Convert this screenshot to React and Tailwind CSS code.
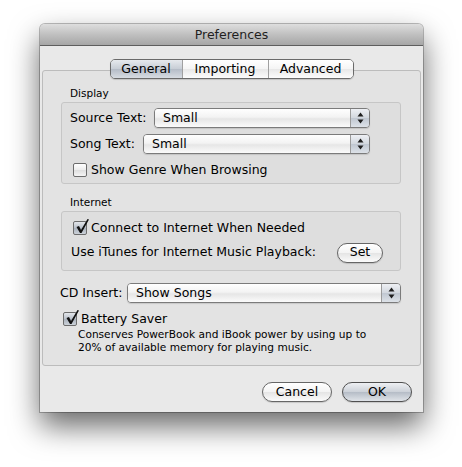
import React from 'react';

const font = "font-['DejaVu_Sans',sans-serif]";

const Arrows = () => (
  <svg width="7" height="12" viewBox="0 0 7 12" aria-hidden="true">
    <path d="M3.5 0.5 L6.5 4.5 L0.5 4.5 Z" fill="#1e1e1e" />
    <path d="M0.5 7.5 L6.5 7.5 L3.5 11.5 Z" fill="#1e1e1e" />
  </svg>
);

const Popup = ({ value, width }) => (
  <div className={`ml-auto flex h-[20px] ${width} overflow-hidden rounded-[4px] border border-[#7b7b7b] shadow-[0_1px_1px_rgba(0,0,0,0.12)]`}>
    <div className="flex flex-1 items-center pl-[8px] bg-[linear-gradient(#ffffff,#f3f3f3_45%,#e6e6e6_55%,#fbfbfb)]">
      {value}
    </div>
    <div className="flex w-[19px] items-center justify-center border-l border-[#9b9b9b] bg-[linear-gradient(#eef0f4,#d3d8df_48%,#c0c7d1_52%,#dde2e8)]">
      <Arrows />
    </div>
  </div>
);

const Checkbox = ({ checked }) => (
  <div
    className={`relative h-[14px] w-[14px] shrink-0 rounded-[2px] border border-[#6c6c6c] ${
      checked
        ? 'bg-[linear-gradient(#e3e6ea,#b9c0ca_50%,#aab2bd_52%,#ccd2d9)]'
        : 'bg-[linear-gradient(#ffffff,#ececec_50%,#dedede_52%,#f4f4f4)]'
    }`}
  >
    {checked && (
      <svg className="absolute left-[1px] top-[-4px]" width="15" height="16" viewBox="0 0 15 16" aria-hidden="true">
        <path d="M1.5 9 L4 8 L6 12 L12.5 1 L14 1.5 L6.5 15 L5 15 Z" fill="#111" />
      </svg>
    )}
  </div>
);

const Pill = ({ children, width, primary }) => (
  <div
    className={`flex h-[20px] ${width} items-center justify-center rounded-full border ${
      primary
        ? 'border-[#4f4f4f] bg-[linear-gradient(#eef0f3,#cdd2d9_48%,#b6bdc7_52%,#dfe3e8)]'
        : 'border-[#666] bg-[linear-gradient(#ffffff,#f4f4f4_48%,#e5e5e5_52%,#fbfbfb)]'
    } shadow-[0_1px_1px_rgba(0,0,0,0.15)]`}
  >
    {children}
  </div>
);

const tabs = [
  { name: 'General', w: 'w-[71px]', active: true },
  { name: 'Importing', w: 'w-[86px]' },
  { name: 'Advanced', w: 'w-[85px]' },
];

export default function App() {
  return (
    <div className={`h-[467px] w-[462px] bg-white pl-[40px] pt-[24px] text-[12.5px] text-black ${font}`}>
      <div className="flex h-[388px] w-[383px] flex-col overflow-hidden rounded-t-[5px] bg-[#e9e9e9] shadow-[0_14px_30px_rgba(0,0,0,0.6),0_0_0_1px_rgba(0,0,0,0.25)]">
        {/* Title bar */}
        <div className="flex h-[22px] shrink-0 items-center justify-center border-b border-[#5e5e5e] bg-[linear-gradient(#dedede,#c0c0c0_50%,#a6a6a6)] pt-[1px] text-[#1f1f1f]">
          Preferences
        </div>

        {/* Tabs */}
        <div className="relative z-10 mt-[13px] flex justify-center">
          <div className="flex h-[20px] overflow-hidden rounded-[5px] border border-[#6a6a6a] shadow-[0_1px_1px_rgba(0,0,0,0.15)]">
            {tabs.map((t, i) => (
              <div
                key={t.name}
                className={`flex ${t.w} items-center justify-center pt-[1px] ${i > 0 ? 'border-l border-[#a0a0a0]' : ''} ${
                  t.active
                    ? 'bg-[linear-gradient(#e6e9ed,#c8ced6_48%,#b5bcc7_52%,#d7dce2)]'
                    : 'bg-[linear-gradient(#ffffff,#f5f5f5_48%,#e8e8e8_52%,#fcfcfc)]'
                }`}
              >
                {t.name}
              </div>
            ))}
          </div>
        </div>

        {/* Tab pane */}
        <div className="mx-[2px] mt-[-9px] h-[296px] rounded-[3px] border border-[#bcbcbc] bg-[#e3e3e3] pt-[16px]">
          <div className="ml-[27px] h-[13px] text-[10.5px] leading-[13px]">Display</div>
          <div className="ml-[18px] mt-[2px] h-[82px] w-[340px] rounded-[3px] border border-[#c6c6c6] bg-[#dedede] pl-[8px] pr-[30px] pt-[5px]">
            <div className="flex h-[20px] items-center">
              <span>Source Text:</span>
              <Popup value="Small" width="w-[216px]" />
            </div>
            <div className="mt-[6px] flex h-[20px] items-center">
              <span>Song Text:</span>
              <Popup value="Small" width="w-[227px]" />
            </div>
            <div className="ml-[3px] mt-[9px] flex h-[14px] items-center gap-[4px]">
              <Checkbox />
              <span>Show Genre When Browsing</span>
            </div>
          </div>

          <div className="ml-[27px] mt-[12px] h-[13px] text-[10.5px] leading-[13px]">Internet</div>
          <div className="ml-[18px] mt-[2px] h-[60px] w-[340px] rounded-[3px] border border-[#c6c6c6] bg-[#dedede] pl-[9px] pr-[17px] pt-[9px]">
            <div className="ml-[2px] flex h-[14px] items-center gap-[4px]">
              <Checkbox checked />
              <span>Connect to Internet When Needed</span>
            </div>
            <div className="mt-[8px] flex h-[19px] items-center">
              <span>Use iTunes for Internet Music Playback:</span>
              <div className="ml-auto">
                <Pill width="w-[46px]">Set</Pill>
              </div>
            </div>
          </div>

          <div className="ml-[17px] mt-[12px] flex h-[20px] w-[341px] items-center">
            <span>CD Insert:</span>
            <Popup value="Show Songs" width="w-[274px]" />
          </div>

          <div className="ml-[20px] mt-[9px] flex h-[14px] items-center gap-[4px]">
            <Checkbox checked />
            <span>Battery Saver</span>
          </div>
          <div className="ml-[35px] mt-[2px] text-[10.6px] leading-[13px]">
            <div>Conserves PowerBook and iBook power by using up to</div>
            <div>20% of available memory for playing music.</div>
          </div>
        </div>

        {/* Buttons */}
        <div className="mt-[16px] flex justify-end gap-[10px] pr-[11px]">
          <Pill width="w-[70px]">Cancel</Pill>
          <Pill width="w-[70px]" primary>OK</Pill>
        </div>
      </div>
    </div>
  );
}
